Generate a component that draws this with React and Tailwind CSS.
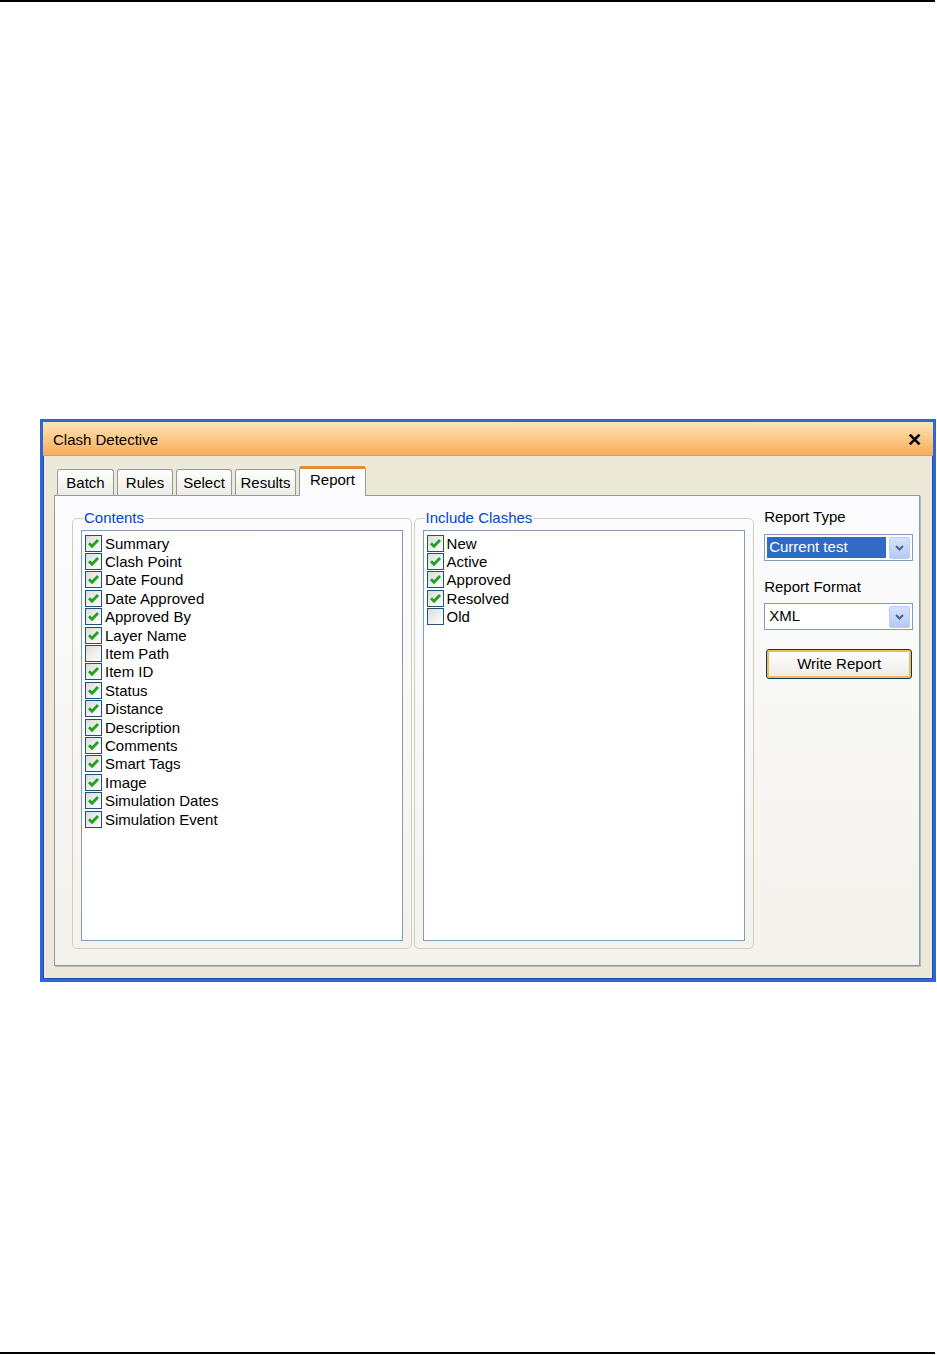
const contents = [
  ["Summary", true],
  ["Clash Point", true],
  ["Date Found", true],
  ["Date Approved", true],
  ["Approved By", true],
  ["Layer Name", true],
  ["Item Path", false],
  ["Item ID", true],
  ["Status", true],
  ["Distance", true],
  ["Description", true],
  ["Comments", true],
  ["Smart Tags", true],
  ["Image", true],
  ["Simulation Dates", true],
  ["Simulation Event", true],
];

const clashes = [
  ["New", true],
  ["Active", true],
  ["Approved", true],
  ["Resolved", true],
  ["Old", false],
];

function CheckBox({ checked }) {
  return (
    <span className="flex h-[17px] w-[17px] shrink-0 items-center justify-center border border-[#1c5180] bg-gradient-to-br from-[#dcdcd7] to-white">
      {checked && (
        <svg width="13" height="13" viewBox="0 0 13 13">
          <polyline points="2,6.3 5,9.3 11,3" fill="none" stroke="#21a121" strokeWidth="2.8" />
        </svg>
      )}
    </span>
  );
}

function CheckList({ items }) {
  return (
    <div className="mt-[3px] flex-1 border border-[#7f9db9] bg-white px-[3px] pt-[3px]">
      {items.map(([label, checked]) => (
        <div key={label} className="flex h-[18.4px] items-center gap-[3px] text-[15px] leading-none text-black">
          <CheckBox checked={checked} />
          <span>{label}</span>
        </div>
      ))}
    </div>
  );
}

function Group({ title, children, className }) {
  return (
    <fieldset className={"flex flex-col rounded-[5px] border border-[#d0d0bf] px-[8px] pb-[7px] pt-0 " + className}>
      <legend className="ml-[2px] px-[1px] text-[15px] leading-[18px] text-[#0046d5]">{title}</legend>
      {children}
    </fieldset>
  );
}

function Chevron() {
  return (
    <span className="flex h-[22px] w-[21px] items-center justify-center rounded-[2px] border border-[#b9cdf6] bg-gradient-to-b from-[#d6e3fd] to-[#b4c9f6]">
      <svg width="11" height="8" viewBox="0 0 11 8">
        <polyline points="2,2 5.5,5.5 9,2" fill="none" stroke="#4d6185" strokeWidth="2" />
      </svg>
    </span>
  );
}

function Tab({ label, active, className }) {
  if (active) {
    return (
      <div className={"relative -mb-px flex h-[30px] items-start justify-center rounded-t-[3px] border border-b-0 border-[#919b9c] border-t-[#e68b2c] border-t-[3px] bg-[#fcfcfe] pt-0 text-[15px] text-black " + className}>
        {label}
      </div>
    );
  }
  return (
    <div className={"flex h-[26px] items-center justify-center rounded-t-[3px] border border-b-0 border-[#919b9c] bg-gradient-to-b from-white to-[#ecebe6] pt-[2px] text-[15px] text-black " + className}>
      {label}
    </div>
  );
}

export default function App() {
  return (
    <div className="flex h-[1355px] w-[937px] flex-col bg-white" style={{ fontFamily: '"Liberation Sans", Arial, sans-serif' }}>
      <div className="h-[2px] w-[935px] bg-black" />
      <div className="mt-[417px] ml-[40px] w-[896px] border-[3px] border-[#2f66d4] bg-[#ece9d8] shadow-[inset_0_0_0_1px_#1b4fb8]">
        <div className="flex h-[34px] items-center justify-between border-b border-[#c9a46c] bg-gradient-to-b from-[#fde4b6] via-[#fcc987] to-[#f6ad5b] pl-[10px] pr-[10px] pt-[3px]">
          <span className="text-[15px] text-black">Clash Detective</span>
          <span className="mr-[1px] text-[18px] font-bold leading-none text-black">✕</span>
        </div>
        <div className="px-[11px] pb-[13px] pt-[10px]">
          <div className="flex items-end gap-[3px] pl-[3px]">
            <Tab label="Batch" className="w-[57px]" />
            <Tab label="Rules" className="w-[56px]" />
            <Tab label="Select" className="w-[56px]" />
            <Tab label="Results" className="w-[61px]" />
            <Tab label="Report" active className="w-[67px]" />
          </div>
          <div className="flex h-[471px] w-[866px] gap-[2px] border border-[#919b9c] bg-gradient-to-b from-[#fcfcfe] to-[#f3f2ec] pl-[17px] pr-[6px] pt-[13px] shadow-[1px_1px_0_#b4b8ba]">
            <Group title="Contents" className="mb-[16px] w-[340px]">
              <CheckList items={contents} />
            </Group>
            <Group title="Include Clashes" className="mb-[16px] w-[341px]">
              <CheckList items={clashes} />
            </Group>
            <div className="-mt-[1px] ml-[8px] flex w-[149px] flex-col text-[15px] text-black">
              <div className="leading-[18px]">Report Type</div>
              <div className="mt-[8px] flex h-[27px] items-center gap-[3px] border border-[#7f9db9] bg-white px-[2px]">
                <span className="flex h-[21px] flex-1 items-center bg-[#316ac5] pl-[2px] text-white">Current test</span>
                <Chevron />
              </div>
              <div className="mt-[17px] leading-[18px]">Report Format</div>
              <div className="mt-[7px] flex h-[27px] items-center border border-[#7f9db9] bg-white pl-[4px] pr-[2px]">
                <span className="flex-1">XML</span>
                <Chevron />
              </div>
              <button className="ml-[2px] mt-[19px] h-[30px] w-[146px] rounded-[3px] border border-[#003c74] bg-gradient-to-b from-white to-[#ecebe6] text-[15px] text-black shadow-[inset_0_0_0_2px_#f7b94a]">
                Write Report
              </button>
            </div>
          </div>
        </div>
      </div>
      <div className="flex-1" />
      <div className="mb-[1px] h-[2px] w-[935px] bg-black" />
    </div>
  );
}
